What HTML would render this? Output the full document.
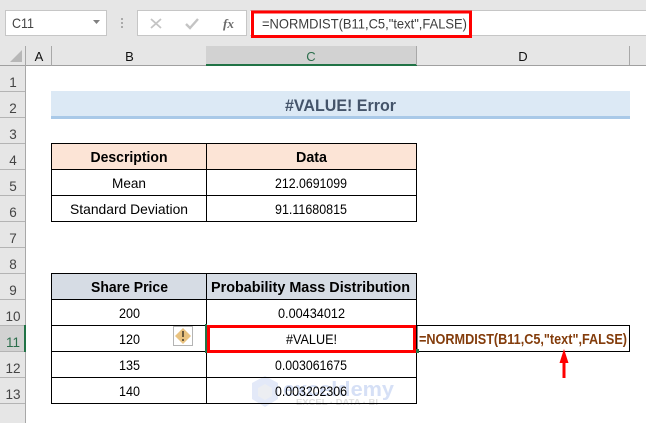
<!DOCTYPE html>
<html><head><meta charset="utf-8"><style>
html,body{margin:0;padding:0;background:#fff}
svg{display:block}
text{font-family:"Liberation Sans",sans-serif}
</style></head><body>
<svg width="646" height="423" viewBox="0 0 646 423" xmlns="http://www.w3.org/2000/svg">
<rect width="646" height="423" fill="#fff"/>
<!-- chrome -->
<rect width="646" height="66" fill="#e6e6e6"/>
<rect x="0" y="66" width="25" height="357" fill="#e6e6e6"/>
<rect x="5.500" y="10.500" width="101" height="25" fill="#fff" stroke="#c6c6c6"/>
<text x="12" y="28" font-size="14" fill="#444" textLength="22" lengthAdjust="spacingAndGlyphs">C11</text>
<polygon points="93,20 100,20 96.500,24" fill="#808080"/>
<rect x="121" y="18" width="2" height="2" fill="#aaa"/><rect x="121" y="22" width="2" height="2" fill="#aaa"/><rect x="121" y="26" width="2" height="2" fill="#aaa"/>
<rect x="137.500" y="10.500" width="109" height="25" fill="#fff" stroke="#c6c6c6"/>
<path d="M151 19L161 28M161 19L151 28" stroke="#c4c4c4" stroke-width="1.800" fill="none"/>
<path d="M186 24L190 28L198 19" stroke="#c4c4c4" stroke-width="2.400" fill="none"/>
<text x="223" y="28" font-size="13" fill="#6a6a6a" font-style="italic" font-weight="bold" style="font-family:'Liberation Serif',serif" textLength="11" lengthAdjust="spacingAndGlyphs">fx</text>
<rect x="250" y="10" width="396" height="26" fill="#fff"/>
<path d="M250 10.500H646M250 35.500H646" stroke="#c6c6c6"/>
<text x="262" y="28.500" font-size="14" fill="#3c3c3c" textLength="205" lengthAdjust="spacingAndGlyphs">=NORMDIST(B11,C5,"text",FALSE)</text>
<rect x="252.500" y="12" width="218" height="24.500" fill="none" stroke="#f00" stroke-width="3"/>
<!-- column headers -->
<rect x="206" y="46" width="210" height="19" fill="#d2d2d2"/>
<rect x="0" y="65" width="646" height="1" fill="#a0a0a0"/>
<rect x="206" y="64" width="211" height="2" fill="#217346"/>
<polygon points="10,62 22,62 22,50" fill="#b7b7b7"/>
<path d="M25.500 46V66M51.500 46V66M416.500 46V65M629.500 46V65" stroke="#a8a8a8"/>
<text x="39" y="61" font-size="13" fill="#111" text-anchor="middle">A</text>
<text x="129.500" y="61" font-size="13" fill="#111" text-anchor="middle">B</text>
<text x="311" y="61" font-size="13" fill="#2c6e4c" text-anchor="middle">C</text>
<text x="523" y="61" font-size="13" fill="#111" text-anchor="middle">D</text>
<!-- row headers -->
<rect x="25" y="66" width="1" height="357" fill="#a8a8a8"/>
<rect x="0" y="325" width="25" height="26" fill="#d2d2d2"/>
<path d="M0 91.500H25M0 117.500H25M0 143.500H25M0 169.500H25M0 195.500H25M0 221.500H25M0 247.500H25M0 273.500H25M0 299.500H25M0 325.500H25M0 351.500H25M0 377.500H25M0 403.500H25" stroke="#b4b4b4"/>
<rect x="24" y="325" width="2" height="27" fill="#217346"/>
<g font-size="13.500" fill="#444" text-anchor="middle">
<text x="13" y="87">1</text><text x="13" y="113">2</text><text x="13" y="139">3</text><text x="13" y="165">4</text><text x="13" y="191">5</text><text x="13" y="217">6</text><text x="13" y="243">7</text><text x="13" y="269">8</text><text x="13" y="295">9</text><text x="13" y="321">10</text><text x="13" y="347" fill="#2c6e4c">11</text><text x="13" y="373">12</text><text x="13" y="399">13</text>
</g>
<!-- title -->
<rect x="51" y="91" width="579" height="26" fill="#dce9f5"/>
<rect x="51" y="116" width="579" height="3" fill="#a9c9e8"/>
<text x="285" y="111" font-size="16.500" font-weight="bold" fill="#44546a" textLength="111" lengthAdjust="spacingAndGlyphs">#VALUE! Error</text>
<!-- table 1 -->
<rect x="52" y="144" width="364" height="25" fill="#fce4d6"/>
<path d="M51.500 143.500H416.500V221.500H51.500ZM206.500 143.500V221.500M51.500 169.500H416.500M51.500 195.500H416.500" fill="none" stroke="#000"/>
<text x="90.500" y="162" font-size="14.500" font-weight="bold" fill="#000" textLength="77" lengthAdjust="spacingAndGlyphs">Description</text>
<text x="296" y="162" font-size="14.500" font-weight="bold" fill="#000" textLength="31" lengthAdjust="spacingAndGlyphs">Data</text>
<g font-size="14" fill="#000">
<text x="112" y="188" textLength="34" lengthAdjust="spacingAndGlyphs">Mean</text>
<text x="70" y="214" textLength="118" lengthAdjust="spacingAndGlyphs">Standard Deviation</text>
<text x="275" y="188" textLength="72" lengthAdjust="spacingAndGlyphs">212.0691099</text>
<text x="275" y="214" textLength="72" lengthAdjust="spacingAndGlyphs">91.11680815</text>
</g>
<!-- watermark -->
<polygon points="265,376 278,383 278,399 265,407 252,399 252,383" fill="#e3e9f8"/>
<polygon points="265,384 272,388 272,396 265,400 258,396 258,388" fill="#eceef2"/>
<text x="283" y="396" font-size="20" font-weight="bold" fill="#d6e0f6" textLength="111" lengthAdjust="spacingAndGlyphs">exceldemy</text>
<text x="296" y="405" font-size="8" font-weight="bold" fill="#e0e0e0" textLength="82" lengthAdjust="spacingAndGlyphs">EXCEL · DATA · BI</text>
<!-- table 2 -->
<rect x="52" y="274" width="364" height="25" fill="#d6dce4"/>
<path d="M51.500 273.500H416.500V403.500H51.500ZM206.500 273.500V403.500M51.500 299.500H416.500M51.500 325.500H416.500M51.500 351.500H416.500M51.500 377.500H416.500" fill="none" stroke="#000"/>
<text x="91" y="292" font-size="14.500" font-weight="bold" fill="#000" textLength="77" lengthAdjust="spacingAndGlyphs">Share Price</text>
<text x="211" y="292" font-size="14.500" font-weight="bold" fill="#000" textLength="199" lengthAdjust="spacingAndGlyphs">Probability Mass Distribution</text>
<g font-size="14" fill="#000">
<text x="119" y="318" textLength="21" lengthAdjust="spacingAndGlyphs">200</text>
<text x="119" y="344" textLength="21" lengthAdjust="spacingAndGlyphs">120</text>
<text x="119" y="370" textLength="21" lengthAdjust="spacingAndGlyphs">135</text>
<text x="119" y="396" textLength="21" lengthAdjust="spacingAndGlyphs">140</text>
<text x="278" y="318" textLength="67" lengthAdjust="spacingAndGlyphs">0.00434012</text>
<text x="286" y="344" textLength="51" lengthAdjust="spacingAndGlyphs">#VALUE!</text>
<text x="275" y="370" textLength="72" lengthAdjust="spacingAndGlyphs">0.003061675</text>
<text x="275" y="396" textLength="72" lengthAdjust="spacingAndGlyphs">0.003202306</text>
</g>
<!-- warning icon -->
<rect x="173.500" y="326.500" width="19" height="19" fill="#fff" stroke="#b4b4b4"/>
<polygon points="183,328 191,336 183,344 175,336" fill="#e9c27f"/>
<rect x="182" y="331" width="2" height="6" fill="#6b5a3c"/><rect x="182" y="339" width="2" height="2" fill="#6b5a3c"/>
<!-- selected cell -->
<rect x="205" y="324" width="2" height="29" fill="#217346"/>
<rect x="208.500" y="326.500" width="206" height="25" fill="none" stroke="#f00" stroke-width="3"/>
<!-- D11 -->
<rect x="417" y="325.500" width="212.500" height="26" fill="#fff" stroke="#000"/>
<rect x="416" y="349" width="3" height="4" fill="#217346"/>
<text x="419" y="344" font-size="14.500" font-weight="bold" fill="#833c0b" textLength="208" lengthAdjust="spacingAndGlyphs">=NORMDIST(B11,C5,"text",FALSE)</text>
<!-- arrow -->
<polygon points="564,349 568.500,363 565.500,363 565.500,378 562.500,378 562.500,363 559.500,363" fill="#f00"/>
</svg>
</body></html>
